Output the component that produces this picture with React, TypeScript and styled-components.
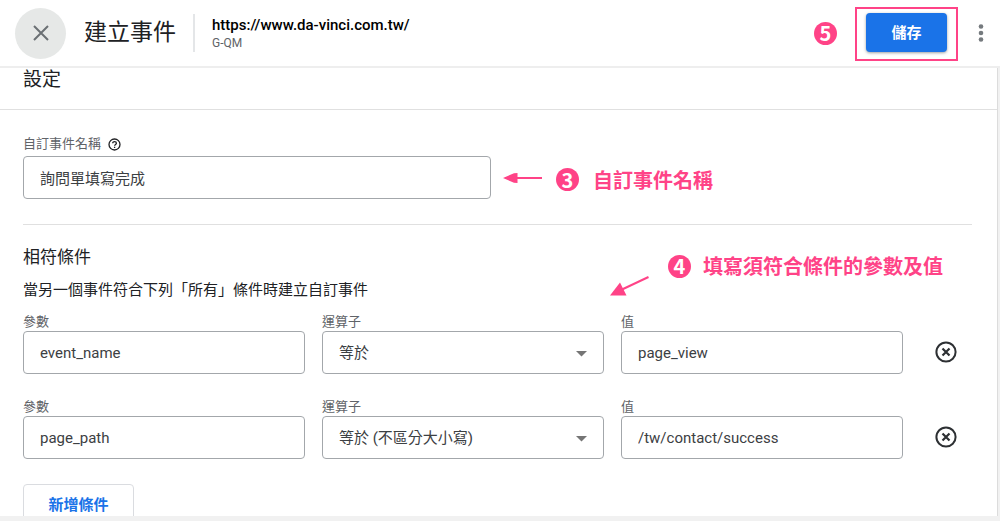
import React from 'react';
import styled, { createGlobalStyle } from 'styled-components';

const GlobalStyle = createGlobalStyle`
  *, *::before, *::after { box-sizing: border-box; }
  body {
    margin: 0;
    background: #f1f1f1;
    color: #202124;
    font-family: Roboto, "Noto Sans CJK TC", sans-serif;
    font-size: 15px;
  }
  button, input, select { font: inherit; color: inherit; margin: 0; }
  h1, h2, h3, p { margin: 0; font-weight: 400; }
`;

const pink = '#ff4387';

const Page = styled.div`
  display: flex;
  flex-direction: column;
  height: 100vh;
  padding-bottom: 5px;
`;

const Header = styled.header`
  display: flex;
  align-items: center;
  flex: none;
  height: 68px;
  padding: 0 9px 0 15px;
  background: #fff;
  border-bottom: 2px solid #eeeeee;
`;

const CloseButton = styled.button`
  display: grid;
  place-items: center;
  width: 51px;
  height: 51px;
  padding: 0;
  border: 0;
  border-radius: 50%;
  background: #e6e8e7;
`;

const PageTitle = styled.h1`
  margin-left: 18px;
  font-size: 23px;
  line-height: 32px;
`;

const Stream = styled.div`
  display: flex;
  flex-direction: column;
  justify-content: center;
  height: 38px;
  margin-left: 17px;
  padding-left: 17px;
  border-left: 2px solid #e4e6e8;
`;

const StreamUrl = styled.span`
  color: #000;
  font-size: 15px;
  font-weight: 500;
  line-height: 20px;
`;

const StreamId = styled.span`
  color: #5f6368;
  font-size: 12px;
  line-height: 16px;
  white-space: nowrap;
`;

const HeaderActions = styled.div`
  display: flex;
  align-items: center;
  margin-left: auto;
`;

const Highlight = styled.div`
  margin: 1px 13px 0 18px;
  padding: 4px 9px 7px;
  border: 2px solid ${pink};
`;

const SaveButton = styled.button`
  display: block;
  width: 81px;
  height: 39px;
  padding: 0 0 2px;
  border: 0;
  border-radius: 4px;
  background: #1a73e8;
  color: #fff;
  font-weight: 700;
  box-shadow: 0 1px 3px rgba(60, 64, 67, 0.5);
`;

const MenuButton = styled.button`
  display: grid;
  place-items: center;
  width: 20px;
  height: 32px;
  padding: 0;
  border: 0;
  background: none;
`;

const Sheet = styled.main`
  flex: 1;
  min-height: 0;
  margin-right: 2px;
  overflow: hidden;
  background: #fff;
  border-right: 1px solid #dcdcdc;
`;

const SheetTitle = styled.h2`
  height: 42px;
  padding-left: 23px;
  border-bottom: 1px solid #e0e0e0;
  font-size: 19px;
  line-height: 23px;
`;

const Section = styled.section`
  position: relative;
  margin: 0 25px 0 23px;
`;

const NameSection = styled(Section)`
  height: 115px;
  padding-top: 25px;
  border-bottom: 1px solid #e0e0e0;
`;

const NameRow = styled.div`
  display: flex;
  align-items: center;
`;

const Label = styled.label`
  display: block;
  color: #5f6368;
  font-size: 13px;
  line-height: 18px;
`;

const LabelRow = styled.div`
  display: flex;
  align-items: center;
  gap: 7px;
  height: 21px;
  padding-bottom: 3px;
`;

const HelpButton = styled.button`
  display: grid;
  place-items: center;
  width: 13px;
  height: 13px;
  padding: 0;
  border: 0;
  background: none;
`;

const TextInput = styled.input<{ $wide?: boolean }>`
  display: block;
  width: ${(p) => (p.$wide ? '468px' : '100%')};
  height: 43px;
  padding: 0 16px;
  border: 1px solid #a3a7ab;
  border-radius: 4px;
  background: #fff;
  color: #3c4043;
`;

const SelectWrap = styled.div`
  position: relative;
`;

const Select = styled.select`
  display: block;
  appearance: none;
  width: 100%;
  height: 43px;
  padding: 0 36px 0 16px;
  border: 1px solid #a3a7ab;
  border-radius: 4px;
  background: #fff;
  color: #3c4043;
`;

const Caret = styled.svg`
  position: absolute;
  top: 20px;
  right: 17px;
  pointer-events: none;
`;

const SectionTitle = styled.h3`
  padding-top: 20px;
  font-size: 17px;
  line-height: 24px;
`;

const Description = styled.p`
  margin: 9px 0 11px;
  line-height: 24px;
`;

const Condition = styled.div`
  display: grid;
  grid-template-columns: repeat(3, 1fr) 52px;
  column-gap: 17px;
  align-items: end;
  margin-bottom: 24px;
`;

const RemoveButton = styled.button`
  display: grid;
  place-items: center;
  height: 43px;
  padding: 0 0 2px;
  border: 0;
  background: none;
`;

const AddButton = styled.button`
  display: block;
  width: 111px;
  height: 38px;
  padding: 0;
  margin-top: 25px;
  border: 1px solid #dadce0;
  border-radius: 4px;
  background: #fff;
  color: #1a73e8;
  font-weight: 700;
`;

const Badge = styled.span`
  display: grid;
  place-items: center;
  flex: none;
  width: 23px;
  height: 23px;
  border-radius: 50%;
  background: ${pink};
  color: #fff;
  font-family: "Noto Sans CJK TC", sans-serif;
  font-size: 20px;
  font-weight: 700;
  line-height: 20px;
`;

const Note = styled.div`
  display: flex;
  align-items: center;
  gap: 12px;
  color: ${pink};
`;

const InlineNote = styled(Note)`
  gap: 14px;
  padding: 4px 0 0 12px;
`;

const FloatingNote = styled(Note)`
  position: absolute;
  top: 26px;
  right: 29px;
`;

const NoteText = styled.span`
  font-family: "Noto Sans CJK TC", sans-serif;
  font-size: 20px;
  font-weight: 700;
  line-height: 30px;
`;

const SlantedArrow = styled.svg`
  align-self: flex-end;
  margin: 0 7px -15px 0;
`;

const operators = ['等於', '等於 (不區分大小寫)'];

const conditions = [
  { id: 'c1', param: 'event_name', operator: operators[0], value: 'page_view' },
  { id: 'c2', param: 'page_path', operator: operators[1], value: '/tw/contact/success' },
];

function ConditionRow({ id, param, operator, value }: (typeof conditions)[number]) {
  return (
    <Condition>
      <div>
        <Label htmlFor={`${id}-param`}>參數</Label>
        <TextInput id={`${id}-param`} defaultValue={param} />
      </div>
      <div>
        <Label htmlFor={`${id}-operator`}>運算子</Label>
        <SelectWrap>
          <Select id={`${id}-operator`} defaultValue={operator}>
            {operators.map((o) => (
              <option key={o}>{o}</option>
            ))}
          </Select>
          <Caret width="11" height="6" viewBox="0 0 11 6" aria-hidden="true">
            <path d="M0 0h11L5.5 5.5z" fill="#757575" />
          </Caret>
        </SelectWrap>
      </div>
      <div>
        <Label htmlFor={`${id}-value`}>值</Label>
        <TextInput id={`${id}-value`} defaultValue={value} />
      </div>
      <RemoveButton type="button" aria-label="移除條件">
        <svg width="22" height="22" viewBox="0 0 22 22" fill="none" stroke="#2d3033" strokeWidth="2">
          <circle cx="11" cy="11" r="9.6" />
          <path d="M7.5 7.5l7 7M14.5 7.5l-7 7" strokeWidth="2.2" />
        </svg>
      </RemoveButton>
    </Condition>
  );
}

export default function App() {
  return (
    <Page>
      <GlobalStyle />
      <Header>
        <CloseButton type="button" aria-label="關閉">
          <svg width="16" height="16" viewBox="0 0 16 16" stroke="#6b7074" strokeWidth="2">
            <path d="M1 1l14 14M15 1L1 15" />
          </svg>
        </CloseButton>
        <PageTitle>建立事件</PageTitle>
        <Stream>
          <StreamUrl>https://www.da-vinci.com.tw/</StreamUrl>
          <StreamId>G-QM</StreamId>
        </Stream>
        <HeaderActions>
          <Badge>5</Badge>
          <Highlight>
            <SaveButton type="button">儲存</SaveButton>
          </Highlight>
          <MenuButton type="button" aria-label="更多選項">
            <svg width="6" height="20" viewBox="0 0 6 20" fill="#757a7e">
              <circle cx="3" cy="3.5" r="2.3" />
              <circle cx="3" cy="10" r="2.3" />
              <circle cx="3" cy="16.5" r="2.3" />
            </svg>
          </MenuButton>
        </HeaderActions>
      </Header>

      <Sheet>
        <SheetTitle>設定</SheetTitle>

        <NameSection>
          <LabelRow>
            <Label htmlFor="event-name">自訂事件名稱</Label>
            <HelpButton type="button" aria-label="說明">
              <svg width="13" height="13" viewBox="0 0 13 13" fill="none" stroke="#202124" strokeWidth="1.3">
                <circle cx="6.5" cy="6.5" r="5.5" />
                <path d="M4.7 5.3c0-2.4 3.7-2.3 3.7-.1 0 1.2-1.8 1.3-1.8 2.6" />
                <path d="M6.6 8.7v1.3" />
              </svg>
            </HelpButton>
          </LabelRow>
          <NameRow>
            <TextInput id="event-name" $wide defaultValue="詢問單填寫完成" />
            <InlineNote>
              <svg width="39" height="14" viewBox="0 0 39 14" aria-hidden="true">
                <path d="M0 5L11 .2L14.500 0v10L11 9.800zM14 4h25v2H14z" fill={pink} />
              </svg>
              <Badge>3</Badge>
              <NoteText>自訂事件名稱</NoteText>
            </InlineNote>
          </NameRow>
        </NameSection>

        <Section>
          <SectionTitle>相符條件</SectionTitle>
          <Description>當另一個事件符合下列「所有」條件時建立自訂事件</Description>
          <FloatingNote>
            <SlantedArrow width="39" height="20" viewBox="0 0 39 20" aria-hidden="true">
              <path d="M0 19.500L10 6.500L16.500 19.500z" fill={pink} />
              <path d="M12 13.500L38.500 1" stroke={pink} strokeWidth="2" />
            </SlantedArrow>
            <Badge>4</Badge>
            <NoteText>填寫須符合條件的參數及值</NoteText>
          </FloatingNote>
          {conditions.map((c) => (
            <ConditionRow key={c.id} {...c} />
          ))}
          <AddButton type="button">新增條件</AddButton>
        </Section>
      </Sheet>
    </Page>
  );
}
